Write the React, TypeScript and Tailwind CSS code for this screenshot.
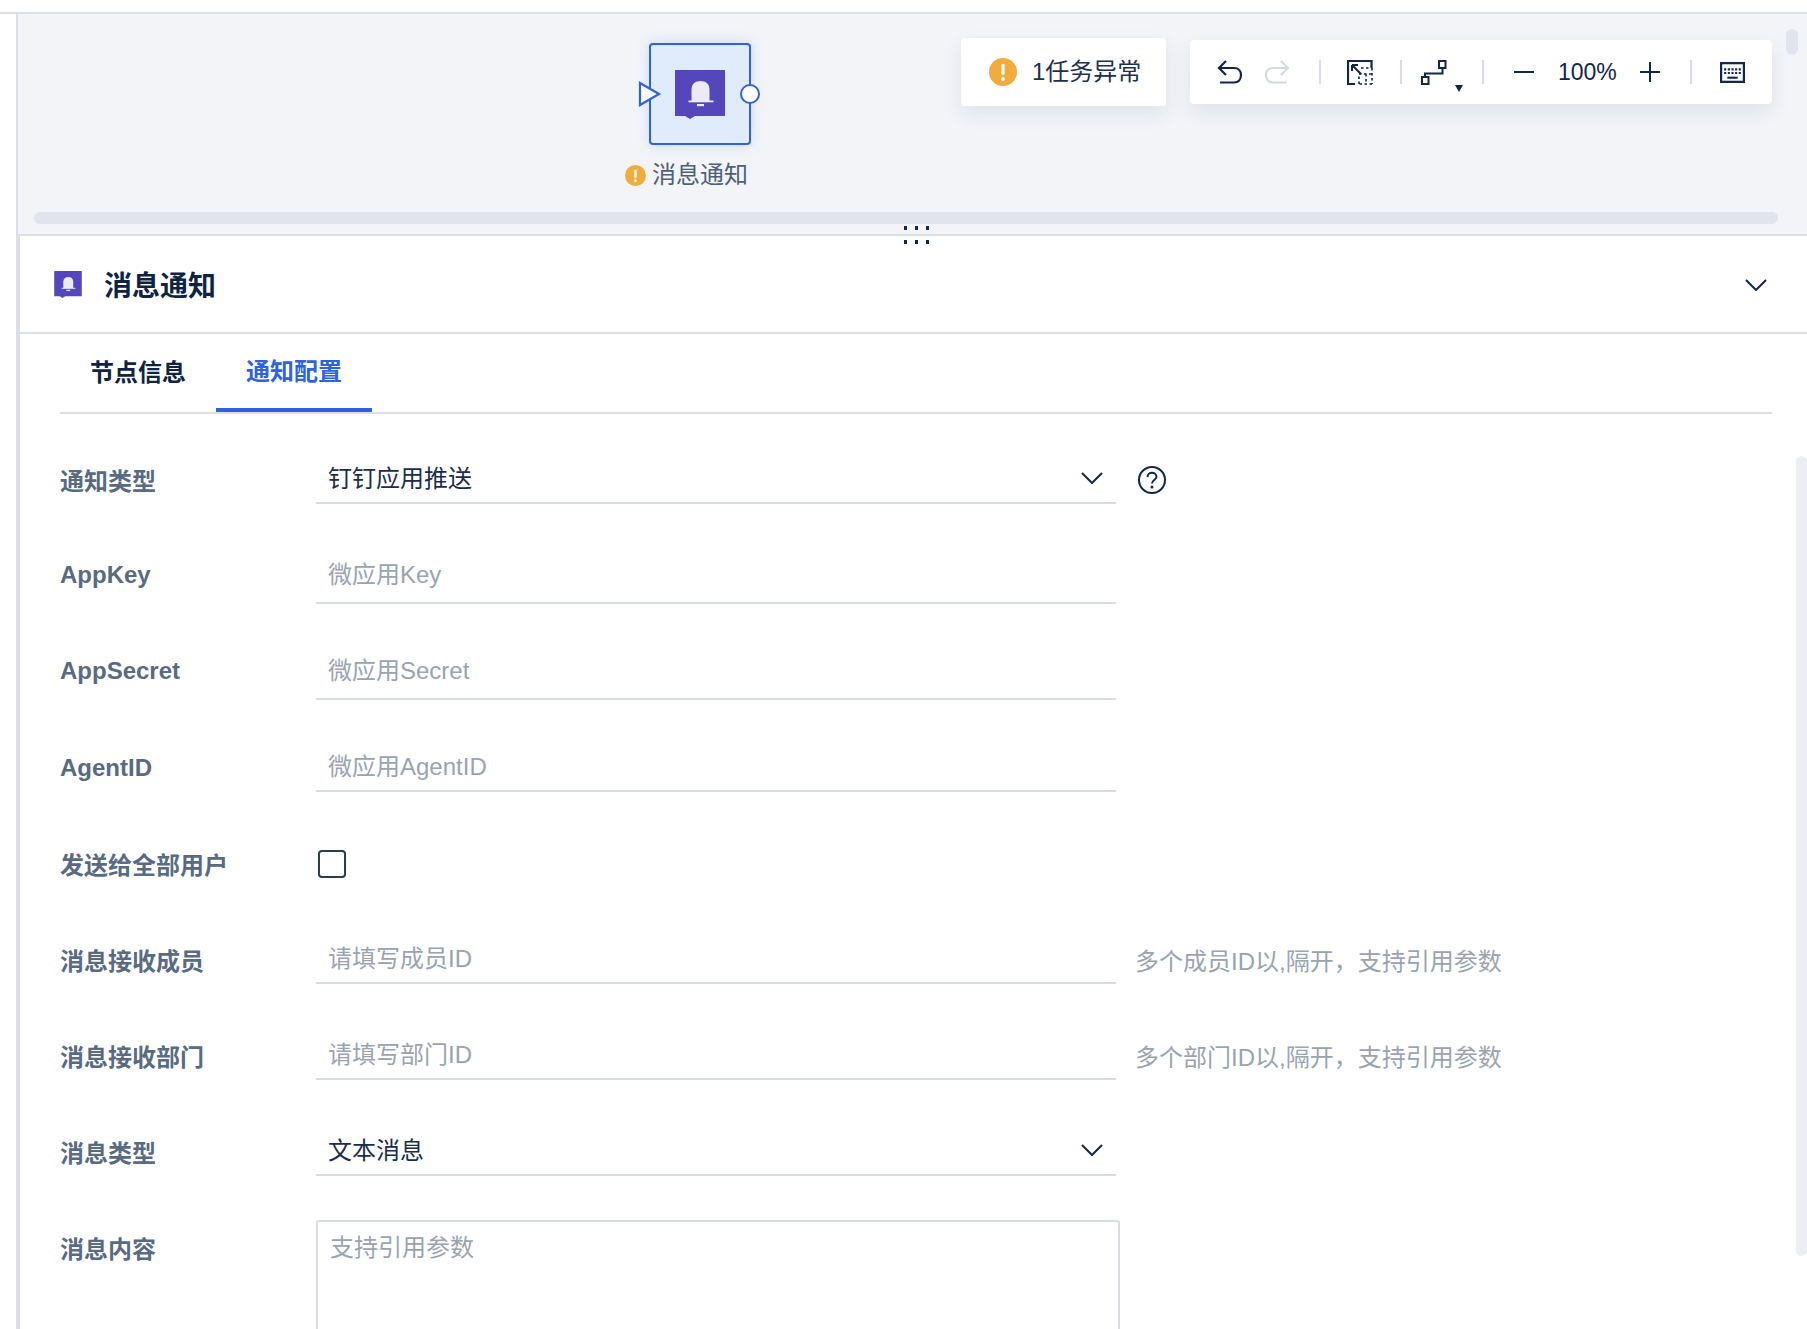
import React from "react";

const FONT = "font-['Liberation_Sans','Noto_Sans_CJK_SC',sans-serif]";

function Warn({ size }: { size: number }) {
  return (
    <svg width={size} height={size} viewBox="0 0 28 28" className="shrink-0">
      <circle cx="14" cy="14" r="14" fill="#f1ac3e" />
      <rect x="12.4" y="6" width="3.2" height="11" rx="1.4" fill="#fff" />
      <circle cx="14" cy="21" r="1.9" fill="#fff" />
    </svg>
  );
}

function Bell({ w, h }: { w: number; h: number }) {
  return (
    <svg width={w} height={h} viewBox="0 0 50 49" className="shrink-0">
      <path d="M0 0H50V46H20L15 49L10 46H0Z" fill="#5546bb" />
      <path d="M16.500 31V20C16.500 14 20 11 25.500 11C31 11 34.500 14 34.500 20V31Z" fill="#ece9fa" />
      <rect x="13.500" y="30.500" width="25" height="1.800" fill="#ece9fa" />
      <rect x="22" y="34" width="7" height="2.200" fill="#ece9fa" />
    </svg>
  );
}

function Chevron() {
  return (
    <svg width="22" height="12" viewBox="0 0 22 12" fill="none" className="mt-[2px] shrink-0">
      <path d="M1 1L11 11L21 1" stroke="#10264a" strokeWidth="2" />
    </svg>
  );
}

function Sep() {
  return <div className="h-[24px] w-[2px] shrink-0 bg-[#dadde5]" />;
}

function Toolbar() {
  return (
    <div className="absolute left-[1172px] top-[26px] flex h-[64px] w-[582px] items-center rounded-[4px] bg-white shadow-[0_8px_20px_rgba(40,50,90,0.09)]">
      <svg width="26" height="24" viewBox="0 0 26 24" fill="none" className="ml-[27px]">
        <path d="M9 1L2 8L9 15M2 8H17C21.500 8 24 11 24 15C24 19.500 21.500 22.500 17 22.500H3" stroke="#10264a" strokeWidth="2.200" />
      </svg>
      <svg width="26" height="24" viewBox="0 0 26 24" fill="none" className="ml-[21px]">
        <path d="M17 1L24 8L17 15M24 8H9C4.500 8 2 11 2 15C2 19.500 4.500 22.500 9 22.500H23" stroke="#d5d9e0" strokeWidth="2.200" />
      </svg>
      <div className="ml-[29px]"><Sep /></div>
      <svg width="26" height="25" viewBox="0 0 26 25" fill="none" className="ml-[26px]">
        <path d="M24.500 8V1H1V24H8" stroke="#10264a" strokeWidth="2.200" />
        <path d="M5 5L14 14M5 5H11M5 5V11" stroke="#10264a" strokeWidth="2" />
        <path d="M14 8H25M25 8V24M25 24H12M12 24V14M12 14H25M19 14V24" stroke="#10264a" strokeWidth="1.600" strokeDasharray="2.500 2.500" />
      </svg>
      <div className="ml-[27px]"><Sep /></div>
      <svg width="26" height="25" viewBox="0 0 26 25" fill="none" className="ml-[19px]">
        <rect x="1" y="17" width="6.500" height="7" stroke="#10264a" strokeWidth="2" />
        <rect x="18" y="1" width="6.500" height="7" stroke="#10264a" strokeWidth="2" />
        <path d="M4 17V13.500H21.500V8" stroke="#10264a" strokeWidth="2" />
      </svg>
      <div className="ml-[8px] mt-[32px] h-0 w-0 border-x-[4px] border-t-[7px] border-x-transparent border-t-[#10264a]" />
      <div className="ml-[19px]"><Sep /></div>
      <div className="ml-[30px] h-[2px] w-[20px] bg-[#10264a]" />
      <span className="ml-[24px] text-[23px] leading-[32px] text-[#10264a]">100%</span>
      <svg width="20" height="20" viewBox="0 0 20 20" className="ml-[23px]">
        <path d="M0 10H20M10 0V20" stroke="#10264a" strokeWidth="2" />
      </svg>
      <div className="ml-[30px]"><Sep /></div>
      <svg width="25" height="21" viewBox="0 0 24 20" fill="none" className="ml-[28px]">
        <rect x="1" y="1" width="22" height="18" stroke="#10264a" strokeWidth="2.200" />
        <path d="M4 7H20M4 10.500H20" stroke="#10264a" strokeWidth="2" strokeDasharray="2 1.500" />
        <path d="M7 15H17" stroke="#10264a" strokeWidth="2" />
      </svg>
    </div>
  );
}

function Dots() {
  return (
    <>
      <i className="h-[4px] w-[3px] bg-[#10264a]" />
      <i className="h-[4px] w-[3px] bg-[#10264a]" />
      <i className="h-[4px] w-[3px] bg-[#10264a]" />
    </>
  );
}

function Canvas() {
  return (
    <div className="relative h-[220px] w-full shrink-0 bg-[#f2f4f8]">
      <div className="absolute left-[631px] top-[29px] flex h-[102px] w-[102px] items-center justify-center rounded-[4px] border-2 border-[#2e62e0] bg-[#e0ebfc] shadow-[0_0_14px_rgba(46,98,224,0.18)]">
        <Bell w={50} h={49} />
      </div>
      <svg width="24" height="26" viewBox="0 0 24 26" className="absolute left-[620px] top-[67px]">
        <path d="M2 2L21 13L2 24Z" fill="#fff" stroke="#2e62e0" strokeWidth="2.200" />
      </svg>
      <div className="absolute left-[722px] top-[70px] h-[20px] w-[20px] rounded-full border-2 border-[#2e62e0] bg-white" />
      <div className="absolute left-[607px] top-[145px] flex items-center gap-[6px]">
        <Warn size={21} />
        <span className="text-[24px] leading-[32px] text-[#4f5f78]">消息通知</span>
      </div>
      <div className="absolute left-[943px] top-[24px] flex h-[68px] w-[205px] items-center rounded-[4px] bg-white pl-[28px] shadow-[0_8px_20px_rgba(40,50,90,0.09)]">
        <Warn size={28} />
        <span className="ml-[15px] text-[24px] leading-[32px] text-[#1d3050]">1任务异常</span>
      </div>
      <Toolbar />
      <div className="absolute left-[16px] top-[198px] h-[12px] w-[1744px] rounded-full bg-[#e1e4ec]" />
      <div className="absolute left-[1768px] top-[15px] h-[26px] w-[12px] rounded-full bg-[#e1e4ec]" />
      <div className="absolute left-[886px] top-[212px] z-10 flex w-[25px] justify-between"><Dots /></div>
      <div className="absolute left-[886px] top-[226px] z-10 flex w-[25px] justify-between"><Dots /></div>
    </div>
  );
}

function Label({ children, mb = "mb-[6px]" }: { children: React.ReactNode; mb?: string }) {
  return (
    <div className={`${mb} w-[256px] shrink-0 text-[24px] font-semibold leading-[32px] text-[#5a6a82]`}>
      {children}
    </div>
  );
}

function Field({ text, placeholder, chevron, shift }: { text: string; placeholder?: boolean; chevron?: boolean; shift: string }) {
  return (
    <div className="flex h-[52px] w-[800px] shrink-0 items-center justify-between border-b-2 border-[#dadce5] pl-[12px] pr-[13px]">
      <span className={`${shift} text-[24px] leading-[32px] ${placeholder ? "text-[#9aa3b2]" : "text-[#1b2d4b]"}`}>{text}</span>
      {chevron && <Chevron />}
    </div>
  );
}

function Hint({ children }: { children: React.ReactNode }) {
  return <div className="mb-[6px] ml-[19px] text-[24px] leading-[32px] text-[#9aa3b2]">{children}</div>;
}

export default function App() {
  return (
    <div className={`${FONT} relative h-[1329px] w-[1807px] overflow-hidden bg-white`}>
      <div className="h-[14px] border-b-2 border-[#dcdde6] bg-white" />
      <div className="flex h-[1315px]">
        <div className="w-[16px] shrink-0 bg-white" />
        <main className="flex w-[1791px] flex-col border-l-2 border-[#dcdde6]">
          <Canvas />
          <section className="flex-1 border-l-2 border-t-2 border-[#dcdde6] bg-white">
            <header className="flex h-[98px] items-center justify-between border-b-2 border-[#dcdde6] pl-[34px] pr-[40px]">
              <div className="flex items-center gap-[22px]">
                <Bell w={28} h={27} />
                <h1 className="mt-[6px] text-[28px] font-bold leading-[36px] text-[#0f2344]">消息通知</h1>
              </div>
              <Chevron />
            </header>
            <div className="ml-[40px] flex h-[80px] w-[1712px] border-b-2 border-[#dcdde6]">
              <div className="flex h-[78px] w-[156px] items-center justify-center pb-[1px] text-[24px] font-semibold text-[#0f2344]">节点信息</div>
              <div className="flex h-[78px] w-[156px] items-center justify-center border-b-4 border-[#2e62e0] pt-[2px] text-[24px] font-semibold text-[#2e62e0]">通知配置</div>
            </div>
            <div className="pl-[40px]">
              <div className="flex h-[90px] items-end">
                <Label>通知类型</Label>
                <Field text="钉钉应用推送" chevron shift="mt-[4px]" />
                <svg width="28" height="28" viewBox="0 0 28 28" fill="none" className="mb-[10px] ml-[22px]">
                  <circle cx="14" cy="14" r="13" stroke="#10264a" strokeWidth="2" />
                  <path d="M9.500 11C9.500 8.500 11.500 6.800 14 6.800C16.500 6.800 18.500 8.500 18.500 10.800C18.500 13.500 14 14 14 17.500" stroke="#10264a" strokeWidth="2" />
                  <circle cx="14" cy="21" r="1.500" fill="#10264a" />
                </svg>
              </div>
              <div className="flex h-[100px] items-end"><Label mb="mb-[13px]">AppKey</Label><Field text="微应用Key" placeholder shift="mb-[4px]" /></div>
              <div className="flex h-[96px] items-end"><Label mb="mb-[13px]">AppSecret</Label><Field text="微应用Secret" placeholder shift="mb-[4px]" /></div>
              <div className="flex h-[92px] items-end"><Label mb="mb-[8px]">AgentID</Label><Field text="微应用AgentID" placeholder shift="mt-[4px]" /></div>
              <div className="flex h-[95px] items-end">
                <Label mb="mb-[5px]">发送给全部用户</Label>
                <div className="mb-[9px] ml-[2px] h-[28px] w-[28px] rounded-[4px] border-2 border-[#2c3a52] bg-white" />
              </div>
              <div className="flex h-[97px] items-end"><Label>消息接收成员</Label><Field text="请填写成员ID" placeholder shift="mt-[4px]" /><Hint>多个成员ID以,隔开，支持引用参数</Hint></div>
              <div className="flex h-[96px] items-end"><Label>消息接收部门</Label><Field text="请填写部门ID" placeholder shift="mt-[4px]" /><Hint>多个部门ID以,隔开，支持引用参数</Hint></div>
              <div className="flex h-[96px] items-end"><Label>消息类型</Label><Field text="文本消息" chevron shift="mt-[4px]" /></div>
              <div className="mt-[44px] flex items-start">
                <div className="mt-[14px] w-[256px] shrink-0 text-[24px] font-semibold leading-[32px] text-[#5a6a82]">消息内容</div>
                <div className="h-[160px] w-[804px] rounded-[3px] border-2 border-[#dadce5] px-[12px] pt-[10px] text-[24px] leading-[32px] text-[#9aa3b2]">支持引用参数</div>
              </div>
            </div>
          </section>
        </main>
      </div>
      <div className="absolute left-[1796px] top-[456px] h-[800px] w-[11px] rounded-[6px] bg-[#edeef2]" />
    </div>
  );
}
